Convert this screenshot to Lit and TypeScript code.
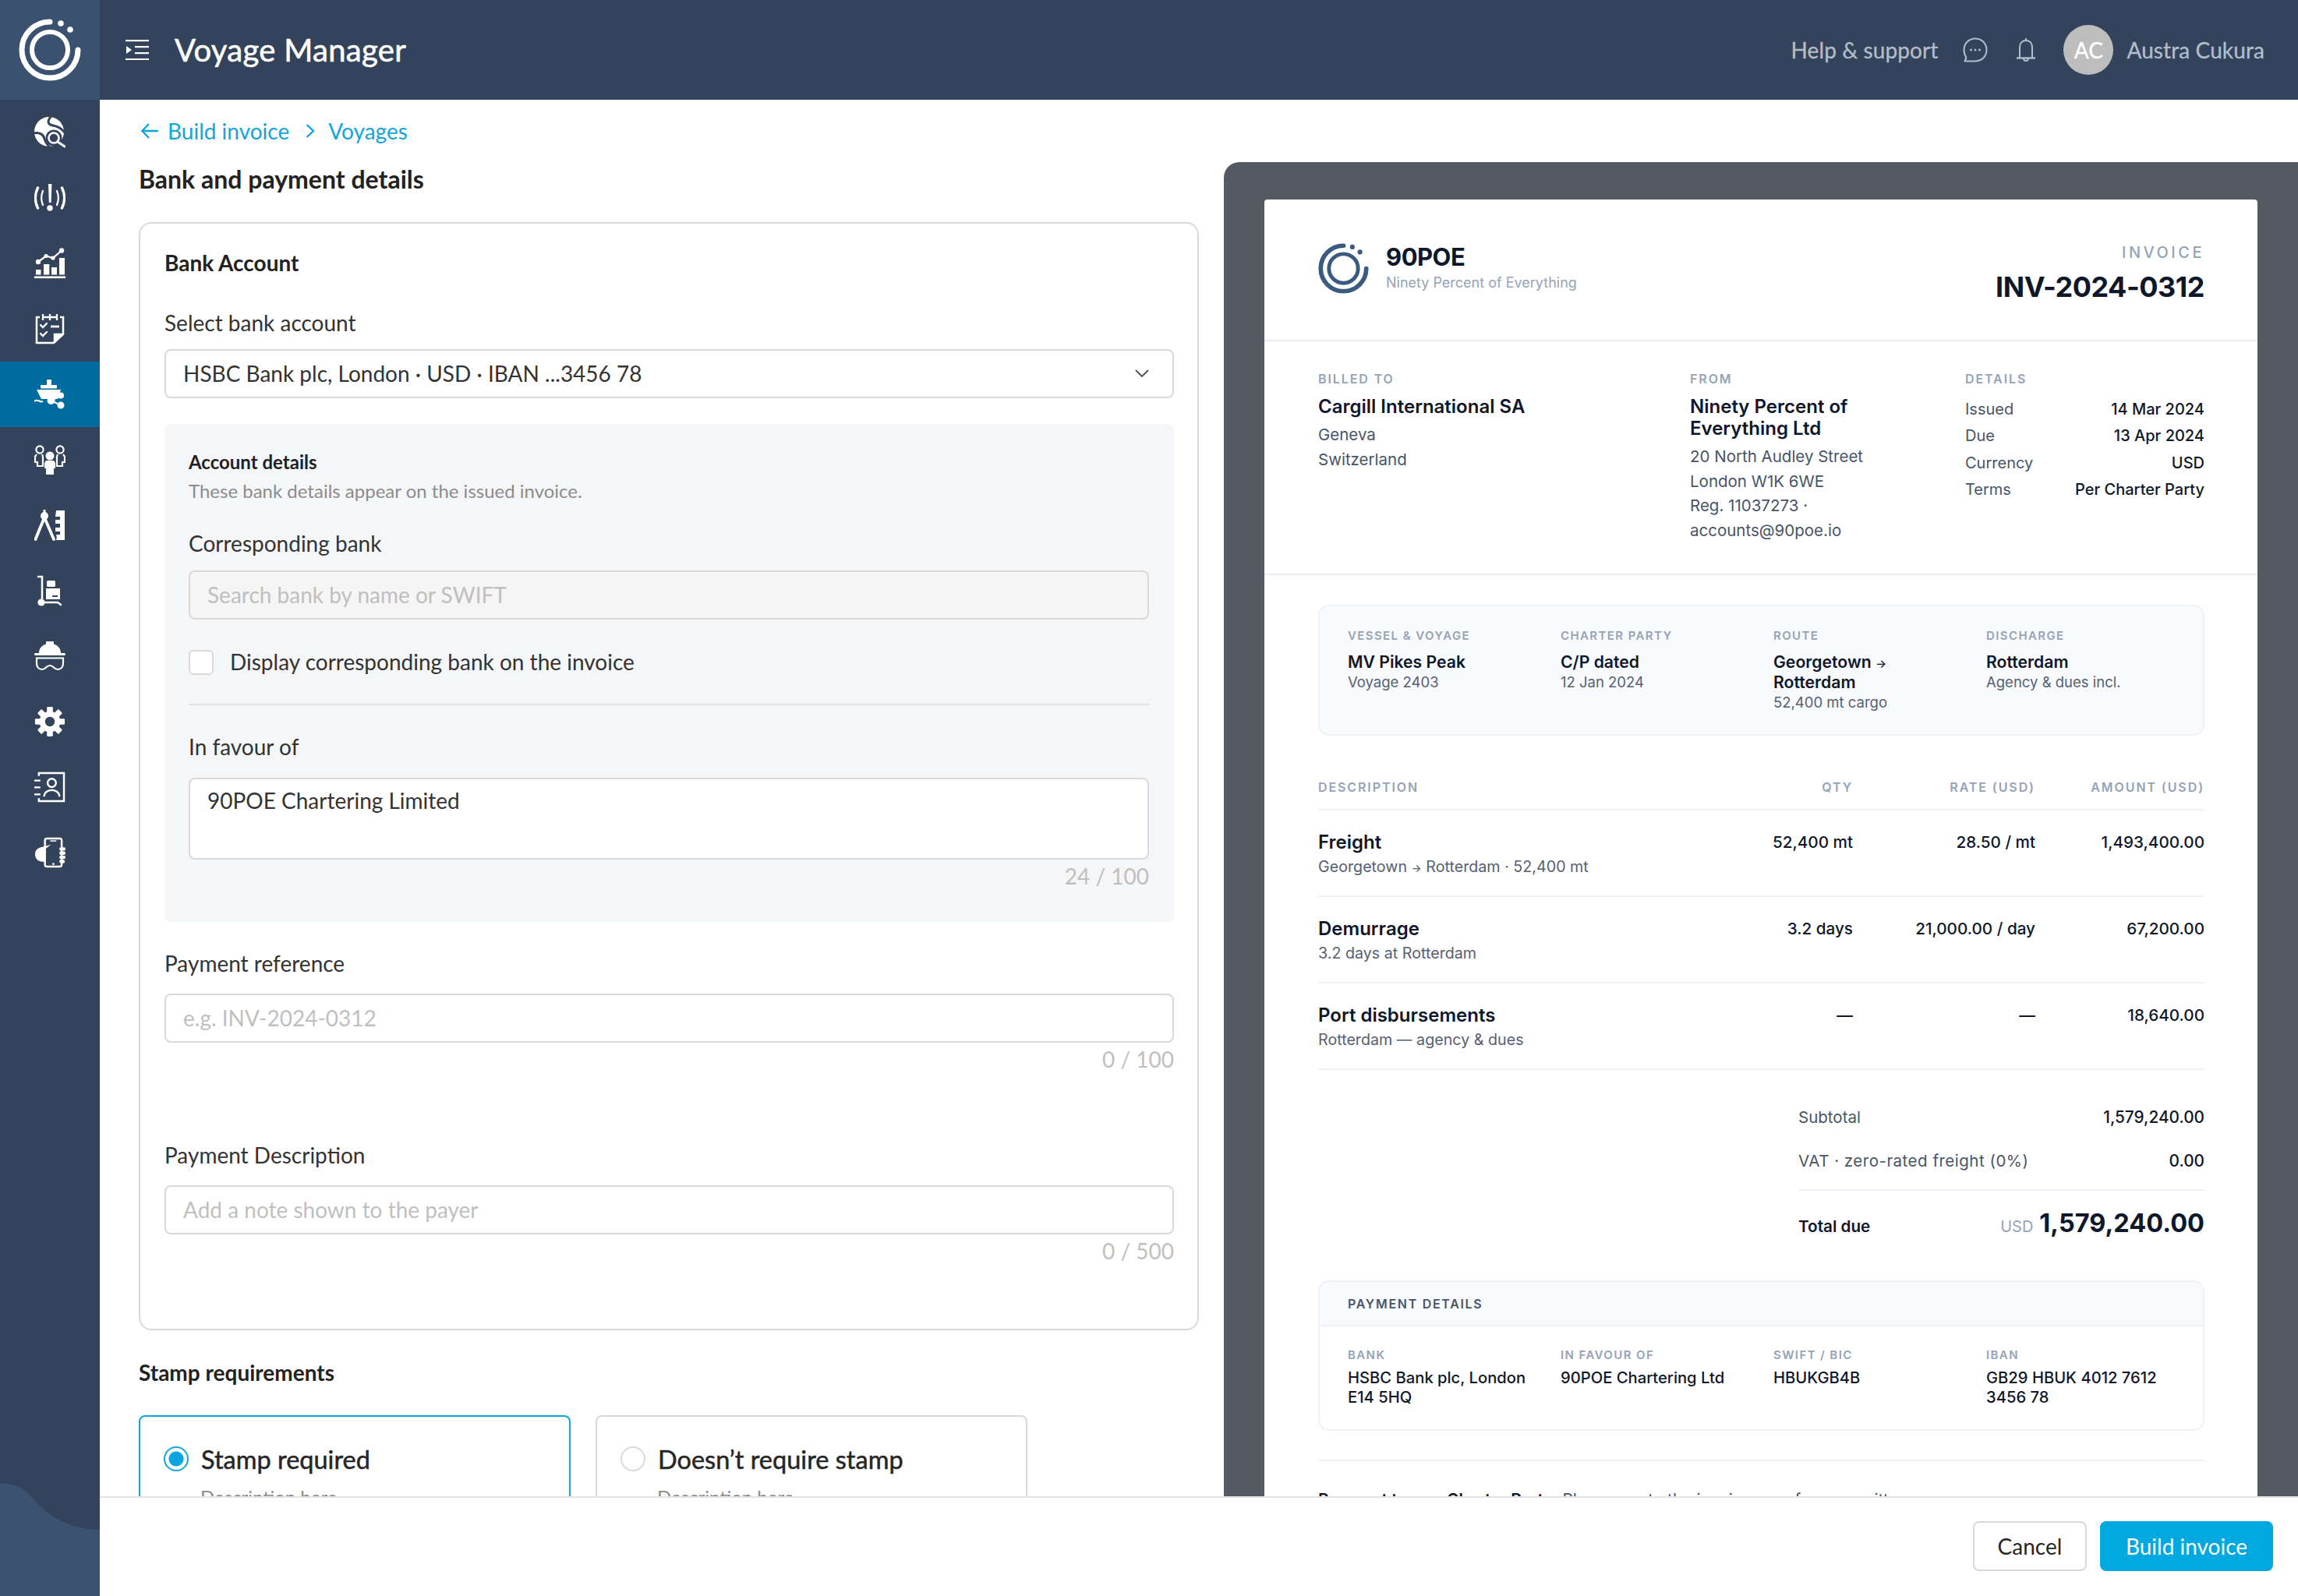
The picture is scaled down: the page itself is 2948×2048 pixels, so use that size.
import { LitElement, html, svg, css } from "lit";
import { customElement } from "lit/decorators.js";

const logoMark = (c: string) => html`<svg class="mark" viewBox="24 24 80 80" fill="none">
  <path d="M64 28A36 36 0 1 0 100 64" stroke=${c} stroke-width="7" stroke-linecap="round"/>
  <circle cx="64" cy="64" r="23" stroke=${c} stroke-width="6"/>
  <circle cx="78" cy="30" r="3.8" fill=${c}/><circle cx="90" cy="38" r="3.8" fill=${c}/>
</svg>`;

const navIcons = (bg: string) => [
  html`<svg viewBox="0 0 40 40"><circle cx="19" cy="19" r="19" fill="#fff"/>
    <g fill="none" stroke=${bg} stroke-width="3"><path d="M22 -1C16 5 17 10 24 11C30 12 35 15 39 20"/><path d="M-1 21C7 19 12 23 13 28C14 33 17 36 21 40"/></g>
    <circle cx="25" cy="27" r="10.500" fill=${bg}/><circle cx="25" cy="27" r="6.500" fill="none" stroke="#fff" stroke-width="2.600"/>
    <path d="M30 32L39 38" stroke="#fff" stroke-width="3" stroke-linecap="round"/></svg>`,
  html`<svg viewBox="0 0 40 36"><path d="M18 0h4.400l-.8 24h-2.800z" fill="#fff"/><circle cx="20" cy="31" r="3.700" fill="#fff"/>
    <g fill="none" stroke="#fff" stroke-linecap="round"><path d="M4.500 5C.5 13 .5 23 4.500 31" stroke-width="3.400"/><path d="M11 9C8.500 15 8.500 21 11 27" stroke-width="2.200"/>
    <path d="M35.500 5C39.500 13 39.500 23 35.500 31" stroke-width="3.400"/><path d="M29 9C31.500 15 31.500 21 29 27" stroke-width="2.200"/></g></svg>`,
  html`<svg viewBox="0 0 40 40"><g fill="#fff"><rect x="2" y="28" width="6.500" height="6.500"/><rect x="12" y="21" width="7.300" height="13.500"/><rect x="22" y="25" width="7" height="9.500"/><rect x="32" y="13" width="7" height="21.500"/><rect x="0" y="36.500" width="40" height="2.600"/>
    <circle cx="5" cy="18" r="3.200"/><circle cx="15" cy="10.500" r="2.600"/><circle cx="24" cy="13" r="2.600"/><circle cx="35" cy="3.500" r="3.200"/></g>
    <path d="M5 18L15 10.500L24 13L35 3.500" fill="none" stroke="#fff" stroke-width="2.300"/></svg>`,
  html`<svg viewBox="0 0 38 40" fill="none" stroke="#fff" stroke-width="2.500"><path d="M6 5H2V38H24L36 27V5H32"/><path d="M36 27H25V38" fill="#fff"/>
    <path d="M10 1V9M19 1V9M28 1V9M10 5H28" stroke-width="2.300"/><path d="M7 15L10 18L15 13M7 26L10 29L15 24" stroke-linecap="round" stroke-width="2.300"/><path d="M20 17H31" stroke-width="2.800"/></svg>`,
  html`<svg viewBox="0 0 40 38"><g fill="#fff"><rect x="16" y="0" width="6" height="8" rx="1"/><rect x="8" y="7" width="21" height="4.500" rx="1"/><path d="M3 13H34L30 25H9Z"/>
    <circle cx="34" cy="20.500" r="4"/><circle cx="21.500" cy="27" r="5"/><circle cx="34" cy="33" r="4.500"/></g>
    <path d="M34 20.500L21.500 27L34 33" fill="none" stroke="#fff" stroke-width="2.200"/><path d="M0 28C4 24 7 30 11 28" fill="none" stroke="#fff" stroke-width="2.200"/></svg>`,
  html`<svg viewBox="0 0 40 38"><g fill="none" stroke="#fff" stroke-width="2.200"><circle cx="7" cy="6" r="4.600"/><path d="M3 12L1 15V22H4V27H11V15L10 12"/><circle cx="33" cy="6" r="4.600"/><path d="M37 12L39 15V22H36V27H29V15L30 12"/></g>
    <g fill="#fff"><circle cx="20" cy="14" r="5.500"/><path d="M15 20H25L27 23V30H25V38H15V30H13V23Z"/></g></svg>`,
  html`<svg viewBox="0 0 40 40"><path d="M13 10L1.500 38M13 10L25 38" stroke="#fff" stroke-width="3.800" fill="none" stroke-linecap="round"/><circle cx="13" cy="8" r="5" fill="#fff"/><rect x="11.500" y="0" width="3" height="5" fill="#fff"/>
    <path d="M28 1H39V39H28C29 36 29 34 28 32H33V28H27V23H33V18H27V13H33V9H27Z" fill="#fff"/></svg>`,
  html`<svg viewBox="0 0 32 40"><g fill="none" stroke="#fff" stroke-width="2.500" stroke-linecap="round"><path d="M1 2H6V33"/><path d="M6 35H26L30 38"/></g>
    <g fill="#fff"><circle cx="5" cy="35" r="4.600"/><rect x="12" y="7" width="11" height="8" rx="1.500"/><path d="M11 17H29V31H11ZM19 26V28H26V26Z" fill-rule="evenodd"/></g></svg>`,
  html`<svg viewBox="0 0 40 38"><g fill="#fff"><path d="M6 15C6 9 10 5 15 3.500V0H25V3.500C30 5 34 9 34 15Z"/><rect x="0" y="15" width="40" height="3" rx="1.500"/></g>
    <path d="M3 21.500H37V28C37 33 34 36 30 36C25 36 25 31 20 31C15 31 15 36 10 36C6 36 3 33 3 28Z" fill="none" stroke="#fff" stroke-width="2.200"/></svg>`,
  html`<svg viewBox="0 0 42 40"><g fill="#fff">${[0, 45, 90, 135, 180, 225, 270, 315].map(
    (a) => svg`<rect x="17" y="0" width="8" height="9" rx="1.500" transform="rotate(${a} 21 20)"/>`
  )}<circle cx="21" cy="20" r="14"/></g><circle cx="21" cy="20" r="6.500" fill=${bg}/></svg>`,
  html`<svg viewBox="0 0 41 41" fill="none" stroke="#fff" stroke-width="2.500"><path d="M6 6V2H39V39H6V35"/><circle cx="23" cy="15" r="5.500"/><path d="M13 32C14 22 32 22 33 32" stroke-linecap="round"/><path d="M0 12H8M0 21H8M0 30H8" stroke-width="2.300"/></svg>`,
  html`<svg viewBox="0 0 41 40"><rect x="14" y="1.500" width="22" height="37" rx="2.500" fill="none" stroke="#fff" stroke-width="2.500"/><g fill="#fff"><rect x="21" y="4" width="8" height="1.500"/><circle cx="25" cy="35" r="1.400"/>
    <path d="M1 22C1 15 7 13 13 12L22 9.500L15 15V32H11C5 32 1 28 1 22Z"/><rect x="33" y="13" width="8" height="4.500" rx="2"/><rect x="33" y="18.500" width="8" height="4.500" rx="2"/><rect x="33" y="24" width="8" height="4.500" rx="2"/><rect x="33" y="29.500" width="7" height="4.500" rx="2"/></g></svg>`,
];

const chatIcon = html`<svg class="ic" viewBox="0 0 32 32" fill="none" stroke="#b4bdca" stroke-width="2"><path d="M16 1.500C7.500 1.500 1.500 8 1.500 16C1.500 20 2.800 23.500 4.500 26L2.500 30.500H16C24.500 30.500 30.500 24 30.500 16C30.500 8 24.500 1.500 16 1.500Z" stroke-linejoin="round"/><g fill="#b4bdca" stroke="none"><circle cx="10.500" cy="16" r="1.500"/><circle cx="16" cy="16" r="1.500"/><circle cx="21.500" cy="16" r="1.500"/></g></svg>`;
const bellIcon = html`<svg class="ic bell" viewBox="0 0 26 32" fill="none" stroke="#b4bdca" stroke-width="2"><path d="M13 1V4M5 26V12C5 7 8.500 4 13 4C17.500 4 21 7 21 12V26"/><path d="M1 26.500H25" stroke-width="2.400"/><path d="M10 27C10 31 16 31 16 27" /></svg>`;
const menuIcon = html`<svg class="menu" viewBox="0 0 30 26"><g fill="#fff"><rect x="0" y="0" width="30" height="2.200"/><rect x="12" y="8" width="18" height="2.200"/><rect x="12" y="16" width="18" height="2.200"/><rect x="0" y="24" width="30" height="2.200"/><path d="M1 8L8 13L1 18Z"/></g></svg>`;

@customElement("app-root")
export class AppRoot extends LitElement {
  static styles = css`
    :host { display: grid; grid-template-columns: 128px 1fr; width: 2948px; height: 2048px; overflow: hidden; background: #fff; font-family: "Lato", "Liberation Sans", sans-serif; color: #333; font-size: 28px; }
    * { box-sizing: border-box; }
    .side { background: #33435c; position: relative; display: flex; flex-direction: column; overflow: hidden; }
    .logo { height: 128px; background: #3a5170; display: flex; align-items: center; justify-content: center; flex: none; }
    .logo .mark { width: 80px; height: 80px; }
    .nav { height: 84px; flex: none; display: flex; align-items: center; justify-content: center; position: relative; z-index: 1; }
    .nav svg { width: 40px; height: 40px; }
    .nav.on { background: #006b9f; }
    .wave { position: absolute; left: 0; bottom: 0; width: 128px; height: 145px; }
    .main { display: flex; flex-direction: column; min-width: 0; height: 2048px; }
    .top { height: 128px; flex: none; background: #33435c; display: flex; align-items: center; padding: 0 43px 0 33px; }
    .menu { width: 30px; height: 26px; }
    .app { color: #fff; font-size: 40px; margin-left: 33px; letter-spacing: .3px; -webkit-text-stroke: .6px #fff; }
    .tr { margin-left: auto; display: flex; align-items: center; color: #b4bdca; font-size: 28px; letter-spacing: .1px; -webkit-text-stroke: .3px #b4bdca; }
    .ic { width: 32px; height: 32px; margin-left: 32px; }
    .ic.bell { width: 26px; margin-left: 36px; }
    .ava { width: 64px; height: 64px; border-radius: 50%; background: #bdbdbd; color: #fff; display: flex; align-items: center; justify-content: center; margin: 0 17px 0 35px; -webkit-text-stroke: .4px #fff; }
    .body { flex: 1; display: flex; overflow: hidden; min-height: 0; }
    .left { width: 1442px; flex: none; padding: 24px 32px 0 50px; overflow: hidden; }
    .crumb { display: flex; align-items: center; height: 32px; color: #12a5dc; font-size: 28px; line-height: 32px; }
    .crumb svg { flex: none; }
    h1 { margin: 27px 0 0; font-size: 32px; line-height: 38px; padding-bottom: 2px; font-weight: 700; color: #222; }
    .card { margin-top: 34px; height: 1422px; border: 2px solid #d9d9d9; border-radius: 16px; padding: 33px 30px 0 31px; }
    h3 { margin: 0; font-size: 28px; line-height: 34px; padding-bottom: 2px; font-weight: 700; color: #222; }
    .lab { line-height: 34px; padding-bottom: 2px; color: #333; }
    .field { height: 63px; border: 2px solid #d9d9d9; border-radius: 8px; background: #fff; display: flex; align-items: center; padding: 0 22px 1px; font-size: 28px; color: #333; }
    .ph { color: #bfbfbf; padding-bottom: 2px; }
    .dis { background: #f5f5f5; }
    .panel { margin-top: 33px; height: 639px; background: #f5f6f8; border-radius: 8px; padding: 33px 32px 0 31px; }
    .pt { font-size: 24px; line-height: 32px; font-weight: 700; color: #222; }
    .ps { margin-top: 5px; font-size: 24px; line-height: 32px; color: #8c8c8c; }
    .check { margin-top: 39px; display: flex; align-items: center; height: 32px; line-height: 30px; gap: 21px; }
    .check span { padding-bottom: 2px; }
    .box { width: 32px; height: 32px; border: 2px solid #d9d9d9; border-radius: 6px; background: #fff; }
    .rule { margin-top: 37px; height: 2px; background: #e3e3e3; }
    .area { margin-top: 21px; height: 105px; border: 2px solid #d9d9d9; border-radius: 8px; background: #fff; padding: 9px 22px; line-height: 36px; }
    .count { margin-top: 5px; line-height: 32px; text-align: right; color: #bfbfbf; }
    h4 { margin: 37px 0 0; font-size: 28px; line-height: 34px; padding-bottom: 2px; font-weight: 700; color: #222; }
    .radios { margin-top: 36px; display: flex; gap: 32px; }
    .rc { width: 554px; height: 200px; border: 2px solid #d9d9d9; border-radius: 8px; padding: 34px 30px 0; }
    .rc.on { border-color: #12a5dc; }
    .rrow { display: flex; align-items: center; height: 40px; gap: 16px; font-size: 32.500px; -webkit-text-stroke: .5px #262626; color: #262626; }
    .dot { width: 32px; height: 32px; border-radius: 50%; border: 2px solid #d9d9d9; flex: none; background: #fff; }
    .on .dot { border-color: #12a5dc; background: radial-gradient(circle, #0aa5de 0 9px, #fff 10px); }
    .rd { margin: 13px 0 0 47px; font-size: 24px; line-height: 32px; color: #8c8c8c; }

    .right { flex: 1; margin-top: 80px; background: #555963; border-radius: 20px 0 0 0; padding: 48px 52px 0; overflow: hidden; }
    .paper { background: #fff; border-radius: 4px; height: 1700px; font-family: "Inter", "Liberation Sans", sans-serif; color: #0f172a; }
    .ph1 { height: 182px; border-bottom: 2px solid #e9edf2; padding: 56px 68px 0 69px; display: flex; justify-content: space-between; }
    .brand { display: flex; gap: 22px; }
    .brand .mark { width: 65px; height: 65px; flex: none; }
    .bn { font-size: 31px; line-height: 36px; font-weight: 700; letter-spacing: -0.5px; }
    .bs { margin-top: 2px; font-size: 18px; line-height: 26px; color: #94a3b8; }
    .inv { text-align: right; margin-top: -1px; }
    .il { font-size: 20px; line-height: 26px; letter-spacing: 3.500px; color: #94a3b8; font-weight: 500; }
    .in { margin-top: 6px; font-size: 36px; line-height: 50px; font-weight: 700; letter-spacing: -0.5px; }
    .parties { height: 300px; border-bottom: 2px solid #e9edf2; padding: 36px 68px 0 69px; display: grid; grid-template-columns: 477px 353px 307px; }
    .cap { font-size: 16px; line-height: 24px; letter-spacing: 1.900px; font-weight: 600; color: #94a3b8; }
    .nm { margin-top: 10px; font-size: 24px; line-height: 28px; font-weight: 600; }
    .sm { font-size: 20.500px; line-height: 31.500px; color: #475569; }
    .gapt { margin-top: 6px; }
    .dl { margin-top: 10px; }
    .dr { display: flex; justify-content: space-between; height: 34.300px; line-height: 34.300px; font-size: 20px; color: #475569; }
    .dr b { font-weight: 500; color: #0f172a; }
    .sec { padding: 0 68px 0 69px; }
    .voy { margin-top: 38px; height: 168px; background: #f8fafc; border: 2px solid #eef1f5; border-radius: 14px; padding: 27px 0 0 36px; display: grid; grid-template-columns: repeat(4, 273px); }
    .vc { font-size: 15px; line-height: 22px; letter-spacing: 1.400px; font-weight: 600; color: #94a3b8; }
    .vv { margin-top: 9px; font-size: 21.200px; line-height: 26px; font-weight: 600; }
    .vs { font-size: 18.500px; line-height: 26px; color: #566074; }
    .ar { font-size: .7em; font-weight: 500; line-height: 0; }
    .thead, .tr2 { display: grid; grid-template-columns: 1fr 200px 234px 217px; }
    .thead { margin-top: 54px; height: 42px; border-bottom: 2px solid #eef1f5; font-size: 16px; line-height: 24px; letter-spacing: 1.900px; font-weight: 600; color: #94a3b8; }
    .ra { text-align: right; }
    .tr2 { height: 111px; border-bottom: 2px solid #eef1f5; padding-top: 27px; font-size: 20.700px; line-height: 28px; }
    .tr2:last-of-type { height: 110px; }
    .tn { font-weight: 600; font-size: 24px; }
    .ts { margin-top: 4px; font-size: 19.700px; line-height: 26px; color: #566074; }
    .tv { font-weight: 500; }
    .tot { margin: 46px 0 0 auto; width: 521px; }
    .tl { display: flex; justify-content: space-between; font-size: 20.500px; line-height: 30px; color: #475569; }
    .tl b { font-weight: 500; color: #0f172a; font-size: 20.800px; }
    .tl + .tl { margin-top: 26px; }
    .tl .wide { letter-spacing: .5px; }
    .tr3 { margin-top: 21px; border-top: 2px solid #eef1f5; padding-top: 20px; display: flex; justify-content: space-between; align-items: baseline; line-height: 44px; font-size: 20.700px; font-weight: 600; }
    .usd { font-size: 20px; color: #94a3b8; font-weight: 400; margin-right: 8px; }
    .big { font-size: 32.500px; font-weight: 700; }
    .pay { margin-top: 47px; height: 193px; border: 2px solid #eef1f5; border-radius: 14px; overflow: hidden; }
    .payh { height: 57px; background: #f8fafc; border-bottom: 2px solid #eef1f5; padding-left: 36px; display: flex; align-items: center; font-size: 16px; font-weight: 600; letter-spacing: 1.700px; color: #475569; }
    .payb { padding: 26px 0 0 36px; display: grid; grid-template-columns: repeat(4, 273px); }
    .pv { margin-top: 5px; font-size: 20.200px; line-height: 25px; font-weight: 500; }
    .end { margin-top: 37px; height: 2px; background: #eef1f5; }
    .terms { margin-top: 35px; font-size: 21px; line-height: 30px; color: #475569; }
    .terms b { color: #0f172a; font-weight: 600; }

    .foot { height: 128px; flex: none; border-top: 2px solid #e4e4e4; background: #fff; display: flex; justify-content: flex-end; gap: 17px; padding: 30px 32px 0 0; }
    .btn { height: 64px; border-radius: 8px; display: flex; align-items: center; justify-content: center; font-size: 28px; }
    .btn.c { width: 146px; border: 2px solid #d9d9d9; color: #262626; }
    .btn.p { width: 222px; background: #00a8e0; color: #fff; }
  `;

  render() {
    const ar = html`<span class="ar">→</span>`;
    const rows = [
      ["Freight", html`Georgetown ${ar} Rotterdam · 52,400 mt`, "52,400 mt", "28.50 / mt", "1,493,400.00"],
      ["Demurrage", "3.2 days at Rotterdam", "3.2 days", "21,000.00 / day", "67,200.00"],
      ["Port disbursements", "Rotterdam — agency & dues", "—", "—", "18,640.00"],
    ];
    const icons = navIcons("#33435c");
    const activeIcons = navIcons("#006b9f");
    return html`
      <aside class="side">
        <svg class="wave" viewBox="0 0 128 145" preserveAspectRatio="none"><path d="M0 0C28 0 36 14 52 30C66 44 88 58 128 60V145H0Z" fill="#3b5270"/></svg>
        <div class="logo">${logoMark("#fff")}</div>
        ${icons.map((ic, i) => html`<div class="nav ${i === 4 ? "on" : ""}">${i === 4 ? activeIcons[4] : ic}</div>`)}
      </aside>
      <div class="main">
        <header class="top">
          ${menuIcon}
          <div class="app">Voyage Manager</div>
          <div class="tr">
            <span>Help &amp; support</span>
            ${chatIcon}${bellIcon}
            <div class="ava">AC</div>
            <span>Austra Cukura</span>
          </div>
        </header>
        <div class="body">
          <section class="left">
            <nav class="crumb">
              <svg width="22" height="22" viewBox="0 0 22 22" fill="none" stroke="#12a5dc" stroke-width="2.400" style="margin:0 12px 0 3px"><path d="M10 2L1.500 11L10 20M2 11H22"/></svg>
              <span>Build invoice</span>
              <svg width="12" height="20" viewBox="0 0 12 20" fill="none" stroke="#12a5dc" stroke-width="2.400" style="margin:0 17px 0 21px"><path d="M1.500 2L10 10L1.500 18"/></svg>
              <span>Voyages</span>
            </nav>
            <h1>Bank and payment details</h1>
            <div class="card">
              <h3>Bank Account</h3>
              <div class="lab" style="margin-top:41px">Select bank account</div>
              <div class="field" style="margin-top:15px;justify-content:space-between">
                <span>HSBC Bank plc, London · USD · IBAN ...3456 78</span>
                <svg width="18" height="10" viewBox="0 0 18 10" fill="none" stroke="#555" stroke-width="2" style="margin-right:8px"><path d="M1 1L9 9L17 1"/></svg>
              </div>
              <div class="panel">
                <div class="pt">Account details</div>
                <div class="ps">These bank details appear on the issued invoice.</div>
                <div class="lab" style="margin-top:34px">Corresponding bank</div>
                <div class="field dis ph" style="margin-top:16px">Search bank by name or SWIFT</div>
                <div class="check"><div class="box"></div><span>Display corresponding bank on the invoice</span></div>
                <div class="rule"></div>
                <div class="lab" style="margin-top:36px">In favour of</div>
                <div class="area">90POE Chartering Limited</div>
                <div class="count">24 / 100</div>
              </div>
              <div class="lab" style="margin-top:36px">Payment reference</div>
              <div class="field ph" style="margin-top:20px">e.g. INV-2024-0312</div>
              <div class="count">0 / 100</div>
              <div class="lab" style="margin-top:90px">Payment Description</div>
              <div class="field ph" style="margin-top:20px">Add a note shown to the payer</div>
              <div class="count">0 / 500</div>
            </div>
            <h4>Stamp requirements</h4>
            <div class="radios">
              <div class="rc on"><div class="rrow"><div class="dot"></div>Stamp required</div><div class="rd">Description here</div></div>
              <div class="rc"><div class="rrow"><div class="dot"></div>Doesn’t require stamp</div><div class="rd">Description here</div></div>
            </div>
          </section>
          <section class="right">
            <div class="paper">
              <div class="ph1">
                <div class="brand">${logoMark("#3a5a80")}<div><div class="bn">90POE</div><div class="bs">Ninety Percent of Everything</div></div></div>
                <div class="inv"><div class="il">INVOICE</div><div class="in">INV-2024-0312</div></div>
              </div>
              <div class="parties">
                <div><div class="cap">BILLED TO</div><div class="nm">Cargill International SA</div><div class="sm gapt">Geneva</div><div class="sm">Switzerland</div></div>
                <div><div class="cap">FROM</div><div class="nm">Ninety Percent of<br />Everything Ltd</div><div class="sm gapt">20 North Audley Street</div><div class="sm">London W1K 6WE</div><div class="sm">Reg. 11037273 ·</div><div class="sm">accounts@90poe.io</div></div>
                <div><div class="cap">DETAILS</div><div class="dl">
                  <div class="dr"><span>Issued</span><b>14 Mar 2024</b></div>
                  <div class="dr"><span>Due</span><b>13 Apr 2024</b></div>
                  <div class="dr"><span>Currency</span><b>USD</b></div>
                  <div class="dr"><span>Terms</span><b>Per Charter Party</b></div>
                </div></div>
              </div>
              <div class="sec">
                <div class="voy">
                  <div><div class="vc">VESSEL &amp; VOYAGE</div><div class="vv">MV Pikes Peak</div><div class="vs">Voyage 2403</div></div>
                  <div><div class="vc">CHARTER PARTY</div><div class="vv">C/P dated</div><div class="vs">12 Jan 2024</div></div>
                  <div><div class="vc">ROUTE</div><div class="vv">Georgetown ${ar}<br />Rotterdam</div><div class="vs">52,400 mt cargo</div></div>
                  <div><div class="vc">DISCHARGE</div><div class="vv">Rotterdam</div><div class="vs">Agency &amp; dues incl.</div></div>
                </div>
                <div class="thead"><span>DESCRIPTION</span><span class="ra">QTY</span><span class="ra">RATE (USD)</span><span class="ra">AMOUNT (USD)</span></div>
                ${rows.map((r) => html`<div class="tr2"><div><div class="tn">${r[0]}</div><div class="ts">${r[1]}</div></div><div class="ra tv">${r[2]}</div><div class="ra tv">${r[3]}</div><div class="ra tv">${r[4]}</div></div>`)}
                <div class="tot">
                  <div class="tl"><span>Subtotal</span><b>1,579,240.00</b></div>
                  <div class="tl"><span class="wide">VAT · zero-rated freight (0%)</span><b>0.00</b></div>
                  <div class="tr3"><span>Total due</span><span><span class="usd">USD</span><span class="big">1,579,240.00</span></span></div>
                </div>
                <div class="pay">
                  <div class="payh">PAYMENT DETAILS</div>
                  <div class="payb">
                    <div><div class="vc">BANK</div><div class="pv">HSBC Bank plc, London<br />E14 5HQ</div></div>
                    <div><div class="vc">IN FAVOUR OF</div><div class="pv">90POE Chartering Ltd</div></div>
                    <div><div class="vc">SWIFT / BIC</div><div class="pv">HBUKGB4B</div></div>
                    <div><div class="vc">IBAN</div><div class="pv">GB29 HBUK 4012 7612<br />3456 78</div></div>
                  </div>
                </div>
                <div class="end"></div>
                <div class="terms"><b>Payment terms: Charter Party.</b> Please quote the invoice no. of your remittance.</div>
              </div>
            </div>
          </section>
        </div>
        <footer class="foot"><div class="btn c">Cancel</div><div class="btn p">Build invoice</div></footer>
      </div>
    `;
  }
}
